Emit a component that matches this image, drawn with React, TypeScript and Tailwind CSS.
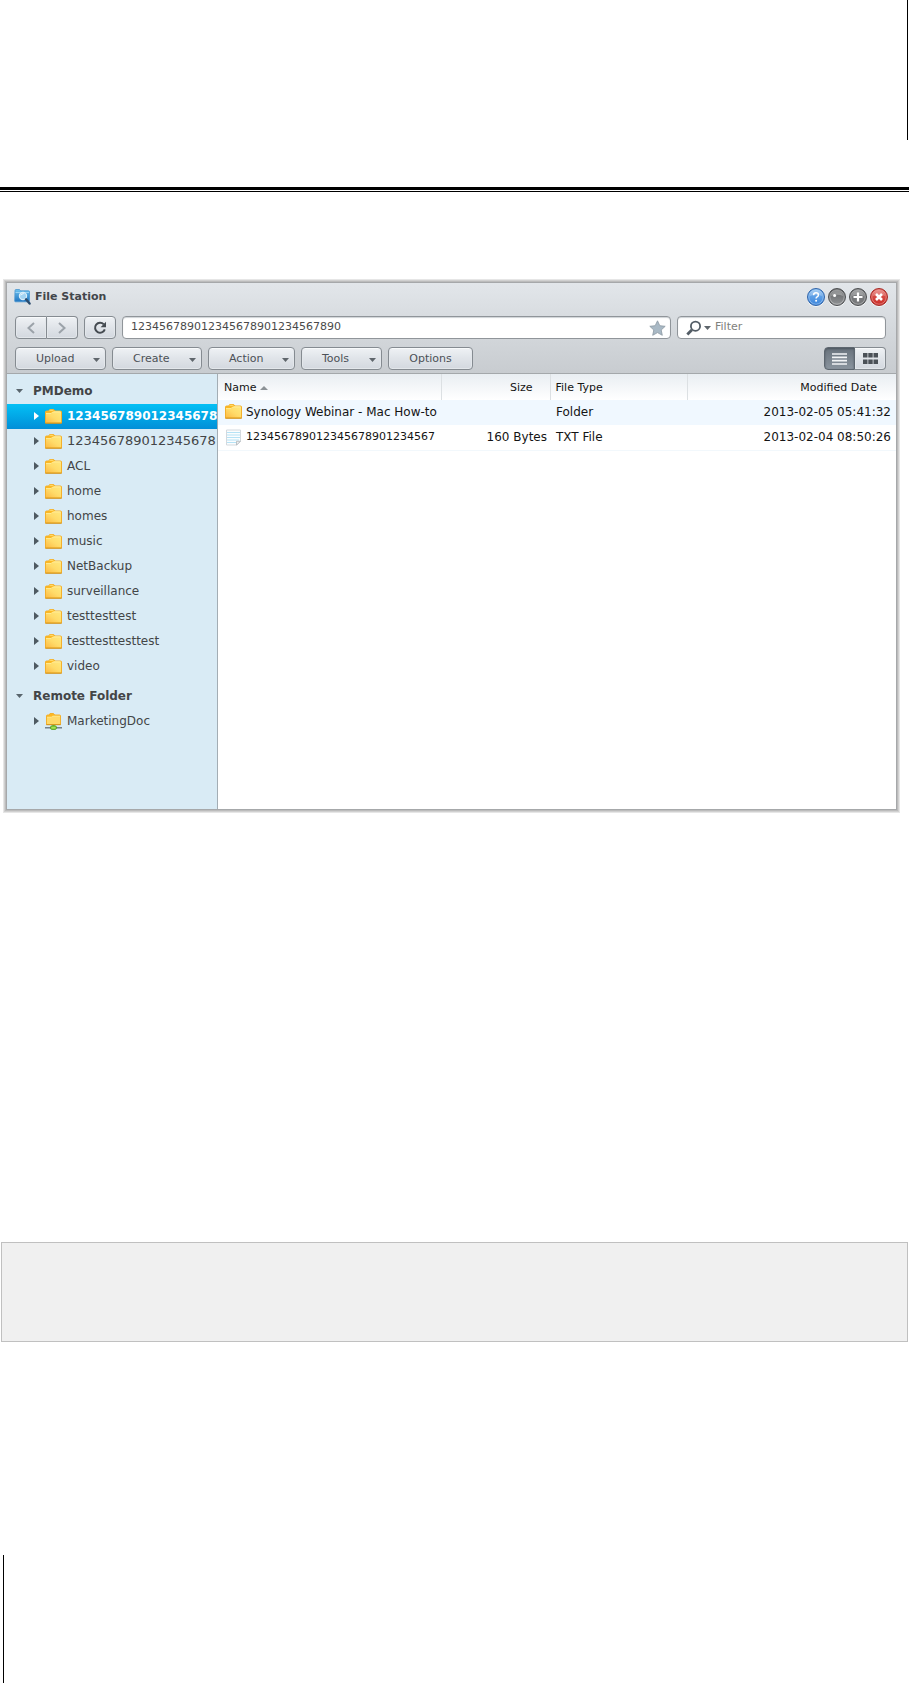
import React from 'react';

interface TreeItem {
    name: string;
    selected?: boolean;
    remote?: boolean;
}

interface TreeGroup {
    title: string;
    items: TreeItem[];
}

const GROUPS: TreeGroup[] = [
    {
        title: 'PMDemo',
        items: [
            { name: '123456789012345678', selected: true },
            { name: '123456789012345678' },
            { name: 'ACL' },
            { name: 'home' },
            { name: 'homes' },
            { name: 'music' },
            { name: 'NetBackup' },
            { name: 'surveillance' },
            { name: 'testtesttest' },
            { name: 'testtesttesttest' },
            { name: 'video' },
        ],
    },
    {
        title: 'Remote Folder',
        items: [{ name: 'MarketingDoc', remote: true }],
    },
];

const MENUS = [
    { label: 'Upload', width: 'w-[91px]' },
    { label: 'Create', width: 'w-[90px]' },
    { label: 'Action', width: 'w-[87px]' },
    { label: 'Tools', width: 'w-[81px]' },
];

const buttonStyle =
    'border border-[#858b91] bg-linear-to-b from-[#eff2f5] via-[#e0e4e9] to-[#d3d8df] text-[#4c5157] shadow-[inset_0_1px_0_#f8fafb,inset_0_0_0_1px_#e3e7eb]';

const FolderIcon = () => (
    <svg width="17" height="15" viewBox="0 0 17 15" className="shrink-0">
        <defs>
            <linearGradient id="folder" x1="1" y1="0" x2="0" y2="1">
                <stop offset="0" stopColor="#ffe87c" />
                <stop offset="0.5" stopColor="#ffdb69" />
                <stop offset="1" stopColor="#fdbb45" />
            </linearGradient>
        </defs>
        <path d="M.5 3q0-1 1-1h2.200l1-1.500h4l1.300 1.500H15.500q1 0 1 1V14H.5z" fill="#fcb823" stroke="#f3b02c" />
        <path d="M4.500 2q.300-.7 1-.7h2.200l1 1.200h6.800" fill="none" stroke="#ffe27b" />
        <path d="M1 4.500h5l1.200-1.200H16V13.500H1z" fill="url(#folder)" />
        <path d="M1 4.500h5l1.200-1.200H16" fill="none" stroke="#fff0a0" strokeWidth=".8" />
        <path d="M.3 14.200h16.400" stroke="#cf901c" />
    </svg>
);

const RemoteFolderIcon = () => (
    <svg width="17" height="17" viewBox="0 0 17 17" className="shrink-0">
        <path d="M1.500 3q0-1 1-1h1.700l.8-1.500h3.500l1.200 1.500h4.800q1 0 1 1v8.500h-14z" fill="#fcb823" stroke="#f3b02c" />
        <path d="M2 4.200h4.500l1-1H15v8H2z" fill="#ffd968" />
        <path d="M2 4.200h4.500l1-1H15" fill="none" stroke="#fff0a0" strokeWidth=".8" />
        <path d="M1.300 11.700h14.400" stroke="#cf901c" />
        <path d="M8.500 12.200v2" stroke="#6cae22" strokeWidth="2.400" />
        <path d="M0 14.800h17" stroke="#657179" strokeWidth="1.300" />
        <rect x="5.700" y="13" width="5.600" height="3.300" rx="1" fill="#a6e356" stroke="#4f9a14" />
    </svg>
);

const TextFileIcon = () => (
    <svg width="17" height="17" viewBox="0 0 17 17" className="shrink-0">
        <path d="M1.500 1h14v11.300l-3.700 3.700H1.500z" fill="#fbfdfe" stroke="#d3d9de" />
        <path d="M2 3.500h13M2 6h13M2 8.500h13M2 11h12M2 13.500h9" stroke="#b5e2f5" />
        <path d="M11.500 16v-3.700h4z" fill="#f0f1f2" stroke="#b0b5b9" strokeWidth=".8" />
    </svg>
);

const StationIcon = () => (
    <svg width="17" height="16" viewBox="0 0 17 16" className="shrink-0">
        <defs>
            <linearGradient id="station" x1="0" y1="0" x2="0" y2="1">
                <stop offset="0" stopColor="#6fc3f0" />
                <stop offset="1" stopColor="#1f74c0" />
            </linearGradient>
        </defs>
        <path d="M1 1.500q0-1 1-1h3.500l1.200 1.300h7.800q1 0 1 1V12q0 .8-.8.8H1.500q-.8 0-.8-.8z" fill="url(#station)" stroke="#4b97cf" strokeWidth=".8" />
        <path d="M1.500 3.500h13.500" stroke="#a9dcf8" strokeWidth=".8" />
        <circle cx="9" cy="7" r="3.600" fill="#a2d3f2" stroke="#d9edf9" strokeWidth="1.200" />
        <path d="M6.800 6.400q1-1.900 3-1.800" fill="none" stroke="#eef8fe" />
        <path d="M12 10.300l3.600 4.300" stroke="#2b4c6e" strokeWidth="2.300" strokeLinecap="round" />
    </svg>
);

const DownArrow = ({ className = 'fill-[#5f666c]' }: { className?: string }) => (
    <svg width="7" height="4" viewBox="0 0 7 4" className={`shrink-0 ${className}`}>
        <path d="M0 0h7l-3.500 4z" />
    </svg>
);

interface RoundButtonProps {
    label: string;
    gradient: string;
    children: React.ReactNode;
}

const RoundButton: React.FC<RoundButtonProps> = ({ label, gradient, children }) => (
    <button
        type="button"
        aria-label={label}
        className={`flex size-[18px] items-center justify-center rounded-full border bg-linear-to-b shadow-[0_1px_0_#f4f6f7] ${gradient}`}
    >
        <svg width="16" height="16" viewBox="0 0 16 16" className="shrink-0">
            <path d="M2 7a6 6 0 0 1 12 0q-6-2.400-12 0z" fill="#fff" opacity=".28" />
            <circle cx="8" cy="8" r="7.200" fill="none" stroke="#fff" strokeWidth=".8" opacity=".4" />
            {children}
        </svg>
    </button>
);

const TitleBar = () => (
    <div className="flex h-7 items-center justify-between pr-2 pl-[7px]">
        <div className="flex items-center gap-1">
            <StationIcon />
            <h1 className="text-[11px] font-bold text-[#42464a]">File Station</h1>
        </div>
        <div className="flex gap-[3px]">
            <RoundButton label="Help" gradient="border-[#2d62a8] from-[#79b4ee] to-[#3c86dc]">
                <path d="M5.600 6.200q0-2.400 2.400-2.400t2.400 2.100q0 1.200-1.300 1.900-1 .6-1 1.700" fill="none" stroke="#fff" strokeWidth="1.500" />
                <circle cx="8.100" cy="11.700" r="1" fill="#fff" />
            </RoundButton>
            <RoundButton label="Minimize" gradient="border-[#4b4d4f] from-[#5f6163] to-[#929496]">
                <circle cx="5.600" cy="6.600" r="1.500" fill="#fff" />
            </RoundButton>
            <RoundButton label="Maximize" gradient="border-[#4b4d4f] from-[#77797b] to-[#77797b]">
                <path d="M8 3.500v9M3.500 8h9" stroke="#fff" strokeWidth="2.200" />
            </RoundButton>
            <RoundButton label="Close" gradient="border-[#a52621] from-[#e0605a] to-[#cb2a25]">
                <path d="M5 5l6 6M11 5l-6 6" stroke="#fff" strokeWidth="2.600" />
            </RoundButton>
        </div>
    </div>
);

const NavigationBar = () => (
    <div className="flex h-[23px] gap-[6px] pr-[10px] pl-2">
        <div className="flex">
            <button type="button" aria-label="Back" className={`flex w-8 items-center justify-center rounded-l ${buttonStyle}`}>
                <svg width="8" height="12" viewBox="0 0 8 12">
                    <path d="M7 1L1.500 6 7 11" fill="none" stroke="#9ba2a9" strokeWidth="2" />
                </svg>
            </button>
            <button type="button" aria-label="Forward" className={`flex w-[31px] items-center justify-center rounded-r border-l-0 ${buttonStyle}`}>
                <svg width="8" height="12" viewBox="0 0 8 12">
                    <path d="M1 1l5.500 5L1 11" fill="none" stroke="#9ba2a9" strokeWidth="2" />
                </svg>
            </button>
        </div>
        <button type="button" aria-label="Refresh" className={`flex w-8 items-center justify-center rounded ${buttonStyle}`}>
            <svg width="14" height="14" viewBox="0 0 14 14">
                <path d="M10.800 3.400A5 5 0 1 0 11.800 8.400" fill="none" stroke="#454b51" strokeWidth="2" />
                <path d="M13 .8v5.400H7.600z" fill="#454b51" />
            </svg>
        </button>
        <div className="flex flex-1 items-center rounded border border-[#90959a] bg-white pr-1 pl-2 shadow-[inset_0_1px_1px_#cfd3d6]">
            <input
                type="text"
                aria-label="Location"
                defaultValue="123456789012345678901234567890"
                className="min-w-0 flex-1 bg-transparent text-[11px] text-[#4a4a4a] outline-none"
            />
            <button type="button" aria-label="Add to favorites">
                <svg width="17" height="16" viewBox="0 0 17 16">
                    <path d="M8.500.8l2.300 4.900 5.400.6-4 3.700 1.100 5.300-4.800-2.700-4.800 2.700L4.800 10l-4-3.700 5.400-.6z" fill="#a9b9c5" stroke="#8b98a2" strokeWidth=".8" />
                </svg>
            </button>
        </div>
        <div className="flex w-[209px] items-center gap-1 rounded border border-[#90959a] bg-white px-2 shadow-[inset_0_1px_1px_#cfd3d6]">
            <button type="button" aria-label="Search options" className="flex items-center gap-[3px]">
                <svg width="15" height="16" viewBox="0 0 15 16">
                    <circle cx="9.500" cy="6.200" r="4.600" fill="none" stroke="#535d66" strokeWidth="1.800" />
                    <path d="M6 9.700L1.300 14.500" stroke="#535d66" strokeWidth="2.800" />
                </svg>
                <DownArrow />
            </button>
            <input
                type="text"
                aria-label="Filter"
                placeholder="Filter"
                className="min-w-0 flex-1 bg-transparent text-[11px] outline-none placeholder:text-[#7f817d]"
            />
        </div>
    </div>
);

const Toolbar = () => (
    <div className="mt-2 flex h-[23px] gap-[6px] pr-[10px] pl-2 text-[11px]">
        {MENUS.map(menu => (
            <button
                key={menu.label}
                type="button"
                aria-haspopup="menu"
                className={`flex items-center justify-between rounded pt-[2px] pr-[5px] pl-5 ${menu.width} ${buttonStyle}`}
            >
                {menu.label}
                <DownArrow />
            </button>
        ))}
        <button type="button" className={`w-[85px] rounded pt-[2px] ${buttonStyle}`}>
            Options
        </button>
        <div className="ml-auto flex">
            <button
                type="button"
                aria-label="List view"
                aria-pressed="true"
                className="flex w-[31px] items-center justify-center rounded-l border border-[#5d666f] bg-linear-to-b from-[#69737d] to-[#8a949e] shadow-[inset_0_1px_2px_#4d565f]"
            >
                <svg width="15" height="12" viewBox="0 0 15 12">
                    <path d="M0 1h15M0 4.300h15M0 7.700h15M0 11h15" stroke="#f2f4f6" strokeWidth="1.700" />
                </svg>
            </button>
            <button type="button" aria-label="Icon view" aria-pressed="false" className={`flex w-[31px] items-center justify-center rounded-r border-l-0 ${buttonStyle}`}>
                <svg width="15" height="11" viewBox="0 0 15 11" fill="#4b5157">
                    <path d="M0 0h4.500v4.500H0zM5.300 0h4.400v4.500H5.300zM10.500 0H15v4.500h-4.500zM0 6.500h4.500V11H0zM5.300 6.500h4.400V11H5.300zM10.500 6.500H15V11h-4.500z" />
                </svg>
            </button>
        </div>
    </div>
);

const TreeRow = ({ item }: { item: TreeItem }) => {
    const numeric = /^\d+$/.test(item.name);
    const text = item.selected ? 'text-xs font-bold' : numeric ? 'text-[13px]' : 'text-xs';

    return (
        <li>
            <button
                type="button"
                className={`flex h-[25px] w-full items-center overflow-hidden pb-px pl-[27px] ${
                    item.selected ? 'bg-linear-to-b from-[#05c0f5] to-[#028fd8] text-white' : 'text-[#434547]'
                }`}
            >
                <svg width="5" height="8" viewBox="0 0 5 8" className={`mr-[6px] shrink-0 ${item.selected ? 'fill-white' : 'fill-[#4e5a62]'}`}>
                    <path d="M0 0l5 4-5 4z" />
                </svg>
                {item.remote ? <RemoteFolderIcon /> : <FolderIcon />}
                <span className={`ml-[5px] whitespace-nowrap ${text}`}>{item.name}</span>
            </button>
        </li>
    );
};

const Sidebar = () => (
    <nav aria-label="Folders" className="w-[211px] shrink-0 border-r border-[#a3adb4] bg-[#d9ebf5] pt-1">
        {GROUPS.map(group => (
            <section key={group.title} className="mb-1">
                <button type="button" className="flex h-[26px] w-full items-center gap-[10px] pl-[9px] text-xs font-bold text-[#434547]">
                    <DownArrow className="fill-[#59656d]" />
                    {group.title}
                </button>
                <ul>
                    {group.items.map((item, i) => (
                        <TreeRow key={i} item={item} />
                    ))}
                </ul>
            </section>
        ))}
    </nav>
);

const FileTable = () => (
    <table className="w-full table-fixed border-collapse text-xs text-[#141414]">
        <colgroup>
            <col className="w-[223px]" />
            <col className="w-[109px]" />
            <col className="w-[137px]" />
            <col />
        </colgroup>
        <thead>
            <tr className="h-[26px] bg-linear-to-b from-[#e9eef2] to-white text-[11px]">
                <th className="border-r border-[#dce0e3] p-0 pt-[2px] pl-[6px] text-left font-normal">
                    <span className="flex items-center gap-1">
                        Name
                        <svg width="8" height="4" viewBox="0 0 8 4" className="fill-[#8c9296]">
                            <path d="M0 4h8L4 0z" />
                        </svg>
                    </span>
                </th>
                <th className="border-r border-[#dce0e3] p-0 pt-[2px] pr-[17px] text-right font-normal">Size</th>
                <th className="border-r border-[#dce0e3] p-0 pt-[2px] pl-[5px] text-left font-normal">File Type</th>
                <th className="p-0 pt-[2px] pr-[19px] text-right font-normal">Modified Date</th>
            </tr>
        </thead>
        <tbody>
            <tr className="h-[25px] bg-[#f0f8ff]">
                <td className="overflow-hidden p-0 pb-[2px] pl-[7px]">
                    <span className="flex items-center gap-1 whitespace-nowrap">
                        <FolderIcon />
                        Synology Webinar - Mac How-to
                    </span>
                </td>
                <td className="p-0"></td>
                <td className="p-0 pb-[2px] pl-[6px]">Folder</td>
                <td className="p-0 pr-[5px] pb-[2px] text-right">2013-02-05 05:41:32</td>
            </tr>
            <tr className="h-[25px] border-b border-[#f2f8fc]">
                <td className="overflow-hidden p-0 pl-[7px]">
                    <span className="flex items-center gap-1 text-[11px] whitespace-nowrap">
                        <TextFileIcon />
                        123456789012345678901234567
                    </span>
                </td>
                <td className="p-0 pr-[3px] text-right">160 Bytes</td>
                <td className="p-0 pl-[6px]">TXT File</td>
                <td className="p-0 pr-[5px] text-right">2013-02-04 08:50:26</td>
            </tr>
        </tbody>
    </table>
);

const FileStation = () => (
    <div className="mr-3 ml-[6px] border border-[#a6a8aa] bg-white shadow-[0_0_0_1px_#bcbcbc,0_0_0_2px_#d0d0d0,0_0_0_3px_#e6e6e6]">
        <div className="h-[91px] border-b border-[#a4a8ab] bg-linear-to-b from-[#e2e6ea] to-[#c8ccd0]">
            <TitleBar />
            <div className="pt-[5px]">
                <NavigationBar />
                <Toolbar />
            </div>
        </div>
        <div className="flex min-h-[435px]">
            <Sidebar />
            <main className="min-w-0 flex-1">
                <FileTable />
            </main>
        </div>
    </div>
);

const App = () => (
    <div className="flex min-h-screen flex-col bg-white font-['DejaVu_Sans',Verdana,sans-serif]">
        <div className="mr-px h-[140px] border-r border-black"></div>
        <div className="mt-[47px] h-[5px] border-t-[3px] border-b border-black"></div>
        <div className="mt-[90px]">
            <FileStation />
        </div>
        <div className="mx-px mt-[432px] h-[100px] border border-[#c0c0c0] bg-[#f0f0f0]"></div>
        <div className="mt-[213px] ml-[3px] min-h-[128px] flex-1 border-l border-black"></div>
    </div>
);

export default App;
